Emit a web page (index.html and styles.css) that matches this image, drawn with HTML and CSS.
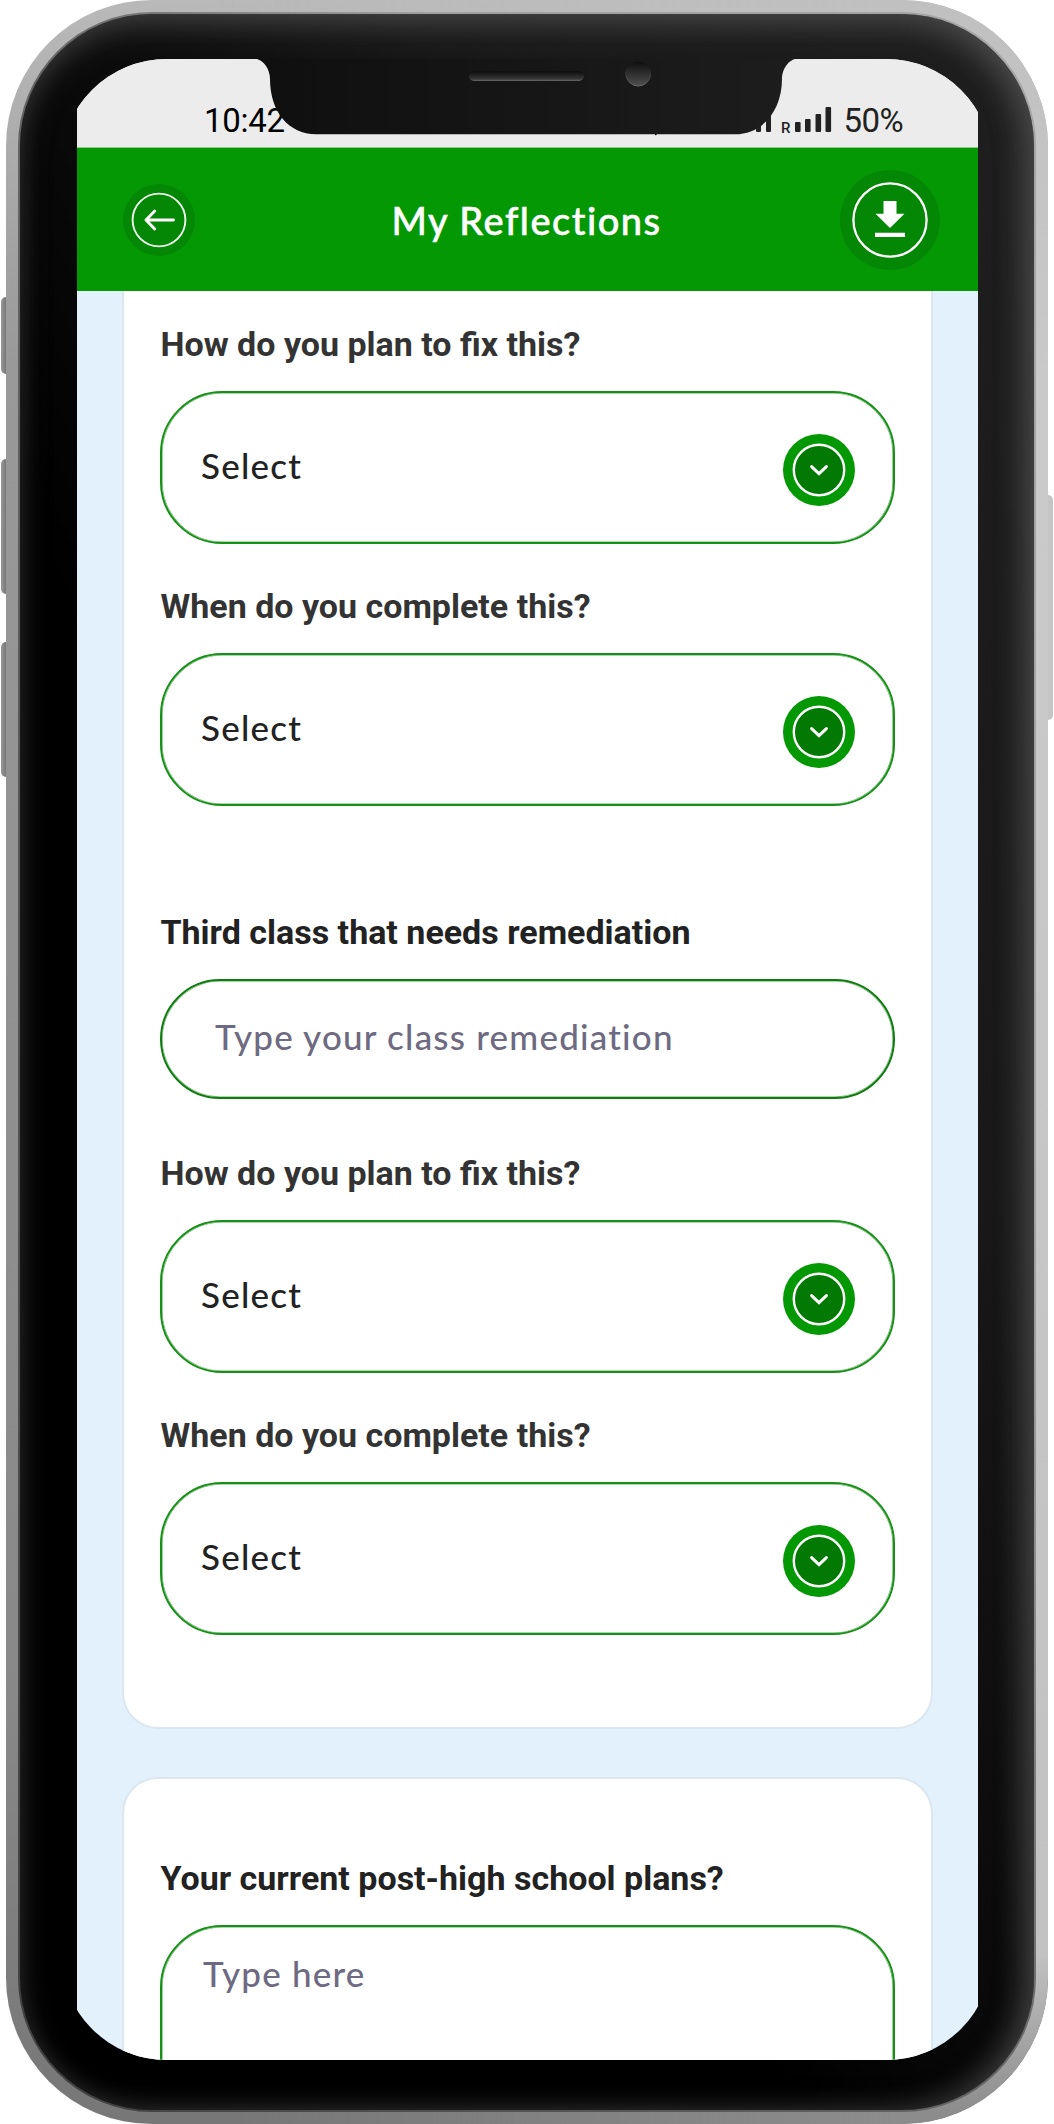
FILE: index.html
```html
<!DOCTYPE html>
<html lang="en">
<head>
<meta charset="utf-8">
<title>My Reflections</title>
<link rel="stylesheet" href="styles.css">
</head>
<body>
<svg class="sprite" width="0" height="0" aria-hidden="true">
  <symbol id="chevron" viewBox="0 0 72 72">
    <circle cx="36" cy="36" r="36" fill="#049804"/>
    <circle cx="36" cy="36" r="25.2" fill="#027902" stroke="#fff" stroke-width="2.4"/>
    <path d="M28.6 32.6 36 39.6 43.4 32.6" fill="none" stroke="#fff" stroke-width="3" stroke-linecap="round"/>
  </symbol>
</svg>
<div class="phone">
  <span class="key key-mute"></span>
  <span class="key key-up"></span>
  <span class="key key-down"></span>
  <span class="key key-power"></span>
  <div class="bezel">
    <div class="display">
      <div class="app">
        <div class="status">
          <span class="time">10:42</span>
          <span class="status-right">
            <svg width="76" height="30" viewBox="0 0 76 30" fill="#222">
              <rect x="0" y="12" width="5" height="15" rx="1"/><rect x="10" y="4" width="5" height="23" rx="1"/>
              <text x="25" y="27.5" class="roaming">R</text>
              <rect x="39" y="17" width="5.6" height="10" rx="1"/><rect x="49" y="14" width="5.6" height="13" rx="1"/><rect x="59.5" y="9" width="5.6" height="18" rx="1"/><rect x="69.5" y="2" width="5.6" height="25" rx="1"/>
            </svg>
            <span class="battery">50%</span>
          </span>
        </div>
        <header class="header">
          <svg class="back" width="72" height="72" viewBox="0 0 72 72" fill="none" stroke="#fff">
            <circle cx="36" cy="36" r="36" fill="#048704" stroke="none"/>
            <circle cx="36" cy="36" r="26.4" stroke="#effbef" stroke-width="1.9"/>
            <path d="M50.5 36H23M31.700 27 23 36l8.700 9" stroke-width="2.9" stroke-linecap="round" stroke-linejoin="round"/>
          </svg>
          <h1 class="title">My Reflections</h1>
          <svg class="download" width="100" height="100" viewBox="0 0 100 100" fill="#fff">
            <circle cx="50" cy="50" r="50" fill="#048704"/>
            <circle cx="50" cy="50" r="36.6" fill="none" stroke="#fff" stroke-width="2.3"/>
            <path d="M43.5 31H56.500V43.800H64.500L50 58 35.500 43.800H43.500ZM35 62.800H65V67H35Z"/>
          </svg>
        </header>
        <main class="content">
          <section class="card card-first">
            <div class="field"><span class="label">How do you plan to fix this?</span><div class="select"><span>Select</span><svg class="chevron"><use href="#chevron"/></svg></div></div>
            <div class="field"><span class="label">When do you complete this?</span><div class="select"><span>Select</span><svg class="chevron"><use href="#chevron"/></svg></div></div>
            <div class="field field-group"><span class="label label-dark">Third class that needs remediation</span><div class="input">Type your class remediation</div></div>
            <div class="field field-after-input"><span class="label">How do you plan to fix this?</span><div class="select"><span>Select</span><svg class="chevron"><use href="#chevron"/></svg></div></div>
            <div class="field"><span class="label">When do you complete this?</span><div class="select"><span>Select</span><svg class="chevron"><use href="#chevron"/></svg></div></div>
          </section>
          <section class="card card-plans">
            <div class="field"><span class="label label-dark">Your current post-high school plans?</span><div class="textarea">Type here</div></div>
          </section>
        </main>
      </div>
    </div>
  </div>
  <svg class="notch" width="546" height="80" viewBox="253 56 546 80">
    <defs>
      <linearGradient id="notch-fill"><stop offset="0" stop-color="#0f0f0f"/><stop offset="1" stop-color="#1d1d1d"/></linearGradient>
      <linearGradient id="lens" x1="0" y1="0" x2="0" y2="1"><stop offset="0" stop-color="#0c0c0c"/><stop offset="1" stop-color="#505050"/></linearGradient>
      <linearGradient id="rim" x1="0" y1="0" x2="0" y2="1"><stop offset="0.2" stop-color="#181818"/><stop offset="1" stop-color="#6a6a6a"/></linearGradient>
      <linearGradient id="slot" x1="0" y1="0" x2="0" y2="1"><stop offset="0.1" stop-color="#101010"/><stop offset="0.8" stop-color="#383838"/><stop offset="1" stop-color="#6a6a6a"/></linearGradient>
    </defs>
    <path d="M253 58.500C264 58.500 270 70 270 79C270 112 289 134.300 316 134.300H735C763 134.300 782 110 782 79C782 70 788 58.500 799 58.500Z" fill="url(#notch-fill)"/>
    <rect x="469" y="71" width="115" height="10" rx="5" fill="url(#slot)"/>
    <circle cx="638.200" cy="73.500" r="12.500" fill="url(#lens)" stroke="url(#rim)"/>
    <rect x="655" y="134" width="1.500" height="1.200"/>
  </svg>
</div>
</body>
</html>
```
FILE: styles.css
```css
* { box-sizing: border-box; }
body { margin: 0; background: #fff; font-family: Roboto, "Liberation Sans", sans-serif; overflow: hidden; }
.sprite { position: absolute; }

/* Device shell */
.phone {
  position: relative;
  width: 1042px;
  height: 2124px;
  margin-left: 6px;
  padding: 12px;
  border-radius: 146px;
  background: linear-gradient(to bottom, #b9b9b9 0, #999 17%, #888 80%, #777 100%);
}
.phone::before {
  content: "";
  position: absolute;
  inset: 0;
  border-radius: 146px;
  background: linear-gradient(to bottom, #c0c0c0, #cacaca 20%, #c2c2c2 92%, #8c8c8c 99.500%);
  -webkit-mask-image: linear-gradient(to right, transparent 20%, #000 85%);
  mask-image: linear-gradient(to right, transparent 20%, #000 85%);
}
.key { position: absolute; left: -5px; width: 5px; border-radius: 5px 0 0 5px; background: linear-gradient(to right, #999, #777); }
.key-mute { top: 297px; height: 77px; }
.key-up { top: 459px; height: 135px; }
.key-down { top: 642px; height: 135px; }
.key-power { left: 1042px; top: 495px; height: 225px; border-radius: 0 5px 5px 0; background: #c4c4c4; }
.bezel {
  position: relative;
  height: 2100px;
  border: 2px solid transparent;
  border-radius: 134px;
  padding: 45px 42px 50px 41px;
  background:
    linear-gradient(to bottom left, #1f1f1f 0, #191919 30%, #000 62%) padding-box,
    linear-gradient(to bottom left, #a5a5a5 0, #a0a0a0 30%, #666 50%, #404040 100%) border-box;
  box-shadow: inset -4px 10px 32px 2px rgba(110, 110, 110, .36), inset -10px 0 30px rgba(110, 110, 110, .34);
}
.display { height: 2001px; padding: 0 14px 0 16px; border-radius: 106px; overflow: hidden; }
.app { height: 2001px; background: #e3f1fd; overflow: hidden; }
.notch { position: absolute; left: 247px; top: 56px; }

/* Status bar */
.status {
  display: flex;
  justify-content: space-between;
  height: 89px;
  padding: 42px 75px 0 127px;
  border-bottom: 1px solid #8bcb8b;
  background: #ececec;
  font-size: 33px;
  line-height: 39px;
}
.time { color: #000; letter-spacing: -.3px; }
.status-right { display: flex; gap: 12px; color: #222; }
.status-right svg { margin-top: 4px; overflow: visible; }
.roaming { font: 500 15px Roboto, sans-serif; }
.battery { letter-spacing: -.6px; }

/* Title bar */
.header {
  display: flex;
  justify-content: space-between;
  align-items: center;
  height: 143px;
  padding: 0 38px 0 46px;
  background: #059805;
  color: #fff;
}
.title { margin: 0 0 0 18px; font: 500 38px/46px Lato, sans-serif; letter-spacing: 1.5px; -webkit-text-stroke: .5px #fff; }

/* Form */
.card { margin: 0 45px; padding: 0 36px; border: 2px solid #dae7f1; border-radius: 36px; background: #fff; }
.card-first { height: 1438px; padding-top: 33px; border-top: 0; border-top-left-radius: 0; border-top-right-radius: 0; }
.card-plans { height: 600px; margin-top: 48px; padding-top: 79px; }
.field { display: flex; flex-direction: column; gap: 27px; }
.field + .field { margin-top: 42px; }
.field + .field-group { margin-top: 106px; }
.field + .field-after-input { margin-top: 54px; }
.label { padding-left: .5px; color: #333; font-size: 34px; font-weight: 700; line-height: 41px; margin-bottom: -1px; white-space: nowrap; }
.label-dark { color: #222; }
.select, .input, .textarea {
  border: 2px solid #169016;
  box-shadow: inset 0 0 0 .6px rgba(22, 144, 22, .7);
  font: 500 35px/44px Lato, sans-serif;
  letter-spacing: 1.2px;
}
.select {
  display: flex;
  justify-content: space-between;
  height: 153px;
  padding: 41px 38px 0 39px;
  border-radius: 62px;
  color: #222;
}
.select span { margin-top: 9px; }
.chevron { width: 72px; height: 72px; }
.input { height: 120px; padding: 33px 53px 0; border-color: #107c10; border-radius: 60px; color: #6e6a82; }
.textarea { height: 300px; padding: 24px 41px; border-radius: 62px; color: #6e6a82; }
```
